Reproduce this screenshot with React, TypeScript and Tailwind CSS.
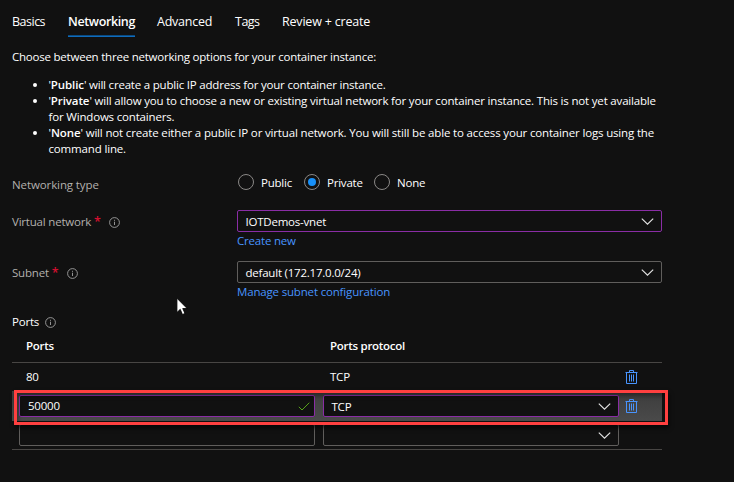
import type { ReactNode } from "react";

function Info() {
  return (
    <svg className="size-[11px] shrink-0" viewBox="0 0 11 11" fill="none" stroke="#a3a3a3" strokeWidth="0.9">
      <circle cx="5.5" cy="5.5" r="4.9" />
      <path d="M5.5 4.7V8M5.5 2.8v1" />
    </svg>
  );
}

function Chevron() {
  return (
    <svg className="h-[7px] w-[13px] shrink-0" viewBox="0 0 13 7" fill="none" stroke="#e4e4e4" strokeWidth="1.15">
      <path d="M0.8 0.6 6.5 6.1 12.2 0.6" />
    </svg>
  );
}

function Trash() {
  return (
    <svg className="h-[14px] w-[13px] shrink-0" viewBox="0 0 13 14" fill="none" stroke="#4894fe" strokeWidth="1">
      <path d="M0.5 2.5h12M4.5 2.5v-2h4v2M1.5 2.5v11h10v-11M4.5 4.5v7M6.5 4.5v7M8.5 4.5v7" />
    </svg>
  );
}

function Required() {
  return <span className="mr-[9px] ml-[3px] w-[6px] text-[12.5px] font-semibold text-[#d10f2f]">*</span>;
}

function Radio({ label, checked, className }: { label: string; checked?: boolean; className: string }) {
  return (
    <label className={`flex items-center ${className}`}>
      <span className="mr-[7px] flex size-4 items-center justify-center rounded-full border border-[#8a8886]">
        {checked && <span className="size-2 rounded-full bg-[#1890f8]" />}
      </span>
      <span className="pt-px">{label}</span>
    </label>
  );
}

function Select({ children, active, className }: { children?: ReactNode; active?: boolean; className: string }) {
  return (
    <div
      className={`flex h-[22px] items-center justify-between rounded-[2px] border bg-[#111111] pr-[7px] pl-[7px] ${
        active ? "border-[#8a2da5]" : "border-[#605e5c]"
      } ${className}`}
    >
      <span className="pt-px pl-[0.5px]">{children}</span>
      <Chevron />
    </div>
  );
}

export default function App() {
  return (
    <div className="relative h-[482px] w-[734px] overflow-hidden bg-[#111111] pl-3 font-['Open_Sans','Noto_Sans',sans-serif] text-[11.5px] leading-4 tracking-[-0.22px] whitespace-nowrap text-white">
      <nav className="flex h-[37px] pt-[11px] text-[12.5px] leading-[22px]">
        <div className="w-14 tracking-[-0.5px]">Basics</div>
        <div className="mr-[22px] w-[67px] border-b border-[#0f6cbd] font-semibold tracking-[-0.37px] shadow-[inset_0_-1px_0_#0b4a80]">Networking</div>
        <div className="w-[78px] tracking-[-0.25px]">Advanced</div>
        <div className="w-[47px] tracking-[-0.5px]">Tags</div>
        <div className="tracking-[-0.2px]">Review + create</div>
      </nav>

      <p className="mt-3">Choose between three networking options for your container instance:</p>

      <ul className="mt-3 ml-9 list-disc">
        <li className="pl-[0.5px] tracking-[-0.2px]">
          '<b className="font-semibold tracking-[-0.1px]">Public</b>' will create a public IP address for your container instance.
        </li>
        <li className="pl-[0.5px] tracking-[-0.18px]">
          '<b className="font-semibold tracking-[-0.1px]">Private</b>' will allow you to choose a new or existing virtual network for your container instance. This is not yet available
          <br />
          for Windows containers.
        </li>
        <li className="pl-[0.5px] tracking-[-0.16px]">
          '<b className="font-semibold tracking-[-0.1px]">None</b>' will not create either a public IP or virtual network. You will still be able to access your container logs using the
          <br />
          command line.
        </li>
      </ul>

      <div className="mt-[17px] flex h-4 items-center">
        <div className="w-[226px] pt-1.5 tracking-[-0.1px] text-[#b3b0ad]">Networking type</div>
        <Radio label="Public" className="w-[66px]" />
        <Radio label="Private" checked className="w-[70px]" />
        <Radio label="None" className="" />
      </div>

      <div className="mt-5 flex h-[22px] items-center">
        <div className="flex w-[225px] items-center pt-0.5 tracking-[-0.2px] text-[#b3b0ad]">
          Virtual network
          <Required />
          <Info />
        </div>
        <Select active className="w-[425px]">IOTDemos-vnet</Select>
      </div>
      <div className="ml-[225px] h-[29px] pt-px tracking-[-0.2px] text-[#4894fe]">Create new</div>

      <div className="flex h-[22px] items-center">
        <div className="flex w-[225px] items-center pt-0.5 tracking-[-0.2px] text-[#b3b0ad]">
          Subnet
          <Required />
          <Info />
        </div>
        <Select className="w-[425px]">default (172.17.0.0/24)</Select>
      </div>
      <div className="ml-[225px] pt-px tracking-[-0.17px] text-[#4894fe]">Manage subnet configuration</div>

      <div className="mt-[14px] flex items-center gap-[6px]">
        Ports
        <Info />
      </div>

      <div className="w-[650px]">
        <div className="flex h-[33px] border-b border-[#484644] pt-2 pl-[14px] font-semibold tracking-[-0.28px]">
          <div className="w-[304px]">Ports</div>
          <div>Ports protocol</div>
        </div>
        <div className="flex h-[28px] items-center pl-[14px]">
          <div className="w-[304px]">80</div>
          <div className="w-[295px]">TCP</div>
          <Trash />
        </div>
        <div className="flex h-[30px] items-center bg-linear-to-b from-[#3c3c3c] to-[#4a4a4a] pl-[7px]">
          <div className="mr-2 flex h-[22px] w-[296px] items-center justify-between rounded-[2px] border border-[#8a2da5] bg-[#111111] pr-1 pl-2">
            <span>50000</span>
            <svg className="h-[9px] w-[12px]" viewBox="0 0 12 9" fill="none" stroke="#57a31a" strokeWidth="1">
              <path d="M0.8 4.8 4 8 11.3 0.7" />
            </svg>
          </div>
          <Select active className="mr-[6px] w-[296px]">TCP</Select>
          <Trash />
        </div>
        <div className="flex h-[29px] items-start gap-2 border-b border-[#484644] pt-[3px] pl-[7px]">
          <div className="h-[22px] w-[296px] rounded-[2px] border border-[#605e5c]" />
          <Select className="w-[296px]" />
        </div>
      </div>

      <div className="absolute top-[390px] left-[14px] h-[35px] w-[654px] border-[3px] border-[#ff4040] shadow-[1px_3px_4px_rgba(0,0,0,0.6),inset_1px_3px_4px_rgba(0,0,0,0.35)]" />
      <svg className="absolute top-[297px] left-[176px] h-[19px] w-[12px]" viewBox="0 0 13 20">
        <path d="M1 1v15.5l3.6-3.4 2.4 5.6 2.7-1.2-2.4-5.3h4.8z" fill="#fff" stroke="#000" strokeWidth="0.9" />
      </svg>
    </div>
  );
}
